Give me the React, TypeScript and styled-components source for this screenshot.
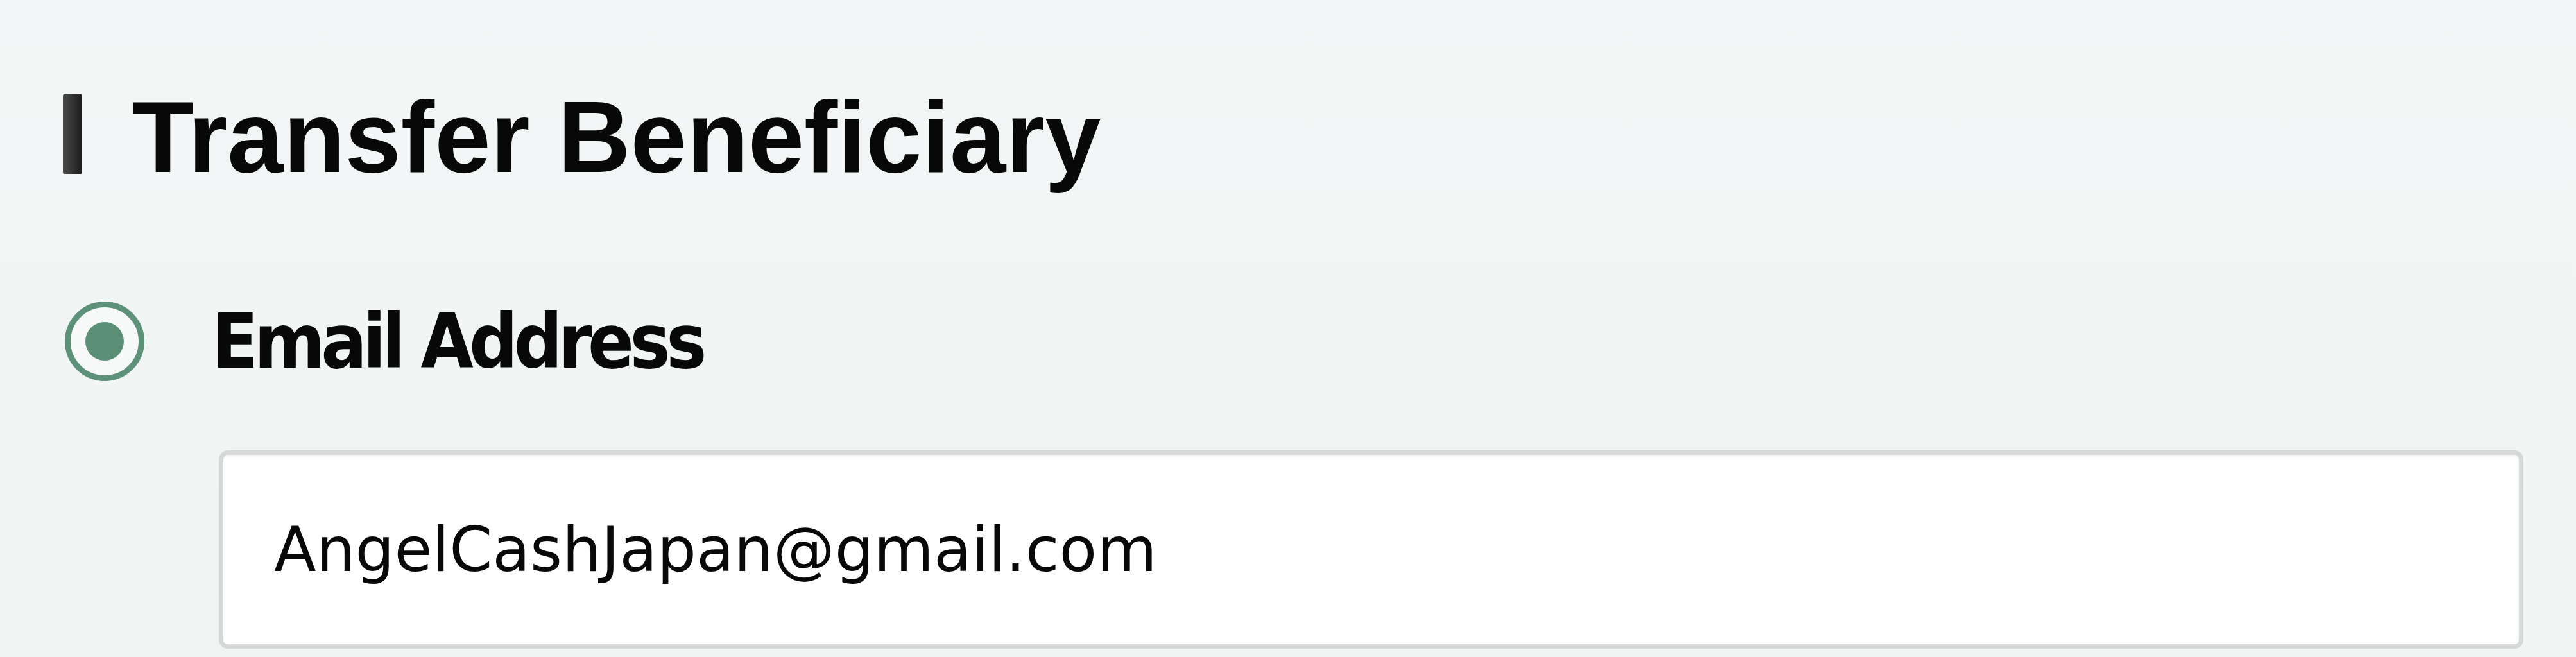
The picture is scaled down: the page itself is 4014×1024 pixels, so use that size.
import React from 'react'
import styled, { createGlobalStyle } from 'styled-components'

const GlobalStyle = createGlobalStyle`
  html, body {
    margin: 0;
    padding: 0;
    background: #f1f5f5;
  }
  * {
    box-sizing: border-box;
  }
`

const App = () => {
  return (
    <>
      <GlobalStyle />
      <Page>
        <TitleRow>
          <TitleBar />
          <Title>Transfer Beneficiary</Title>
        </TitleRow>
        <OptionRow>
          <Radio checked>
            <RadioDot />
          </Radio>
          <OptionLabel>Email Address</OptionLabel>
        </OptionRow>
        <Field>
          <TextInput type='text' readOnly value='AngelCashJapan@gmail.com' />
        </Field>
      </Page>
    </>
  )
}

const Page = styled.div`
  min-height: 1024px;
  padding: 136px 82px 0 98px;
  display: flex;
  flex-direction: column;
  background: linear-gradient(180deg, #f2f6f6 0%, #f0f5f4 100%);
`

const TitleRow = styled.div`
  display: flex;
  flex-direction: row;
  align-items: flex-start;
  gap: 78px;
  margin-bottom: 178px;
`

const TitleBar = styled.div`
  width: 30px;
  height: 124px;
  margin-top: 11px;
  background: linear-gradient(90deg, #4a4a4a 0%, #1c1c1c 100%);
  border-radius: 2px;
`

const Title = styled.h1`
  margin: 0;
  font-family: 'Liberation Sans', Arial, sans-serif;
  font-size: 157px;
  font-weight: 700;
  line-height: 156px;
  letter-spacing: 0;
  color: #080808;
`

const OptionRow = styled.div`
  display: flex;
  flex-direction: row;
  align-items: center;
  gap: 105px;
  padding-left: 3px;
  margin-bottom: 108px;
`

const Radio = styled.div<{ checked?: boolean }>`
  width: 124px;
  height: 124px;
  flex-shrink: 0;
  border-radius: 50%;
  border: 9px solid #5e917a;
  display: flex;
  align-items: center;
  justify-content: center;
  background: ${props => (props.checked ? '#f6f9f8' : 'transparent')};
`

const RadioDot = styled.div`
  width: 60px;
  height: 60px;
  border-radius: 50%;
  background: #5b8f76;
`

const OptionLabel = styled.div`
  font-family: 'DejaVu Sans Condensed', 'DejaVu Sans', Verdana, sans-serif;
  font-stretch: condensed;
  font-size: 118px;
  font-weight: 700;
  line-height: 118px;
  letter-spacing: -6.5px;
  color: #080808;
`

const Field = styled.div`
  padding-left: 243px;
  display: flex;
`

const TextInput = styled.input`
  width: 100%;
  height: 309px;
  padding: 0 40px 0 79px;
  border: 7px solid #d6d8d8;
  border-radius: 14px;
  background: #ffffff;
  box-shadow: inset 0 3px 3px rgba(0, 0, 0, 0.04);
  font-family: 'DejaVu Sans', Verdana, sans-serif;
  font-size: 96px;
  color: #080808;
  outline: none;
`

export default App
